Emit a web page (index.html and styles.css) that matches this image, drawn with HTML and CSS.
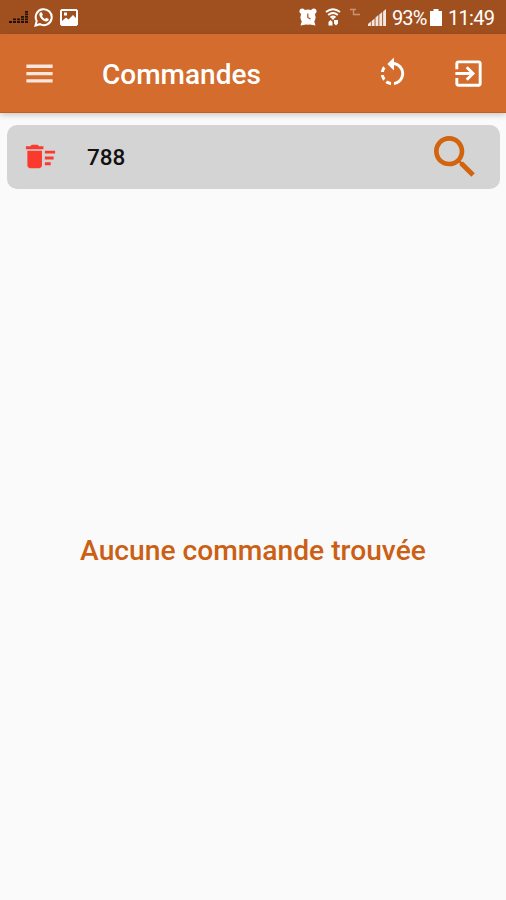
FILE: index.html
```html
<!DOCTYPE html>
<html lang="fr">
<head>
<meta charset="utf-8">
<title>Commandes</title>
<link rel="stylesheet" href="styles.css">
</head>
<body>
<div class="status">
  <svg class="st-eq" width="20" height="14" viewBox="0 0 20 14"><path d="M0 11h3v2H0zM4 11h3v2H4zM4 8.500h3v1.800H4zM8 11h3v2H8zM12 11h3v2h-3zM12 8.500h3v1.800h-3zM12 6h3v1.800h-3zM8 8.500h3v1.800H8zM16 11h3v2h-3zM16 8.500h3v1.800h-3zM16 6h3v1.800h-3zM16 3.500h3v1.800h-3zM16 1h3v1.800h-3z" fill="#241005"/></svg>
  <svg class="st-chat" width="20" height="20" viewBox="0 0 20 20"><path d="M1.500 18.500l1.200-4.500a8 8 0 1 1 3.200 3.200z" fill="none" stroke="#fff" stroke-width="2"/><path d="M6.200 5.500l1.500-.3 1.200 2.600-.9 1.200c.7 1.400 1.700 2.300 3 2.900l1.300-1.200 2.500 1.300c-.1 1.500-1.200 2.400-2.500 2.400C9 14.200 5.500 10.500 5.300 7.500c0-.8.300-1.500.9-2z" fill="#fff"/></svg>
  <svg class="st-pic" width="18" height="17" viewBox="0 0 18 17"><path fill="#fff" fill-rule="evenodd" d="M1.500 0h15L18 1.500v14L16.500 17h-15L0 15.500v-14zM2 2v10l4-3.500 2.500 2L13 6l3 3V2zM4 3.500h3v3H4z"/></svg>
  <span class="gap"></span>
  <svg class="st-alarm" width="18" height="18" viewBox="0 0 18 18"><g fill="#fff"><circle cx="9" cy="9.200" r="7.600"/><circle cx="3.200" cy="3.200" r="2.700"/><circle cx="14.800" cy="3.200" r="2.700"/><path d="M1.500 17.500l1.500-5 4 4zM16.500 17.500l-1.500-5-4 4z"/></g><path d="M8.800 5.500v4l2.700 1.500" fill="none" stroke="#a0501f" stroke-width="1.200"/></svg>
  <svg class="st-wifi" width="16" height="18" viewBox="0 0 16 18"><path d="M1 4q7-5.500 14 0M3.200 7q4.800-4 9.600 0M5.500 9.500q2.500-2 5 0" fill="none" stroke="#fff" stroke-width="1.900"/><path d="M6 9.500h4l-2 2.800zM3.500 17.500V14l2-2 2 2v3.500zM9 12h4v3.500l-2 2-2-2z" fill="#fff"/></svg>
  <svg class="st-net" width="10" height="9" viewBox="0 0 10 9"><path d="M0 1.500h6M3.500 2v4.500H10" fill="none" stroke="#c99374" stroke-width="1.400"/></svg>
  <svg class="st-signal" width="18" height="17" viewBox="0 0 18 17"><path d="M0 17v-2l2.900-2.500V17zM3.700 17v-5l2.900-2.500V17zM7.500 17V8.500L10.400 6v11zM11.300 17V5.500L14.200 3v14zM15.100 17V2.500L18 0v17z" fill="#f4e6de"/></svg>
  <span class="percent">93%</span>
  <svg class="st-bat" width="12" height="17" viewBox="0 0 12 17"><path d="M3.500 0h5v2H12v15H0V2h3.500z" fill="#fff"/></svg>
  <span class="clock">11:49</span>
</div>
<header class="bar">
  <svg class="menu" width="35" height="35" viewBox="0 0 24 24"><path d="M3 18.200h18v-2.300H3zm0-5h18v-2.300H3zm0-7.300v2.300h18V5.900H3z"/></svg>
  <h1>Commandes</h1>
  <svg class="rotate" width="35" height="35" viewBox="0 0 24 24"><path d="M7.110 8.530L5.700 7.110C4.800 8.270 4.240 9.610 4.070 11h2.020c.14-.87.49-1.720 1.020-2.470zM6.090 13H4.070c.17 1.390.72 2.730 1.620 3.890l1.410-1.420c-.52-.75-.87-1.590-1.010-2.470zm1.010 5.320c1.160.9 2.510 1.440 3.900 1.610V17.900c-.87-.15-1.710-.49-2.460-1.030L7.100 18.320zM13 4.070V1L8.450 5.550 13 10V6.090c2.840.48 5 2.940 5 5.910s-2.160 5.430-5 5.910v2.020c3.950-.49 7-3.850 7-7.930s-3.050-7.440-7-7.930z"/></svg>
  <svg class="exit" width="35" height="35" viewBox="0 0 24 24"><path d="M10.090 15.590L11.500 17l5-5-5-5-1.410 1.410L12.670 11H3v2h9.670l-2.580 2.590zM19 3H5c-1.110 0-2 .9-2 2v4h2V5h14v14H5v-4H3v4c0 1.100.89 2 2 2h14c1.100 0 2-.9 2-2V5c0-1.100-.9-2-2-2z"/></svg>
</header>
<div class="search">
  <svg class="sweep" width="35" height="35" viewBox="0 0 24 24"><path d="M15 16h4v2h-4zm0-8h7v2h-7zm0 4h6v2h-6zM3 18c0 1.100.9 2 2 2h6c1.100 0 2-.9 2-2V8H3v10zM14 5h-3l-1-1H6L5 5H2v2h12z"/></svg>
  <span class="query">788</span>
  <svg class="find" width="56" height="56" viewBox="0 0 24 24"><path d="M15.500 14h-.79l-.28-.27C15.410 12.590 16 11.110 16 9.500 16 5.910 13.090 3 9.500 3S3 5.910 3 9.500 5.910 16 9.500 16c1.610 0 3.090-.59 4.230-1.570l.27.28v.79l5 4.990L20.490 19l-4.990-5zm-6 0C7.010 14 5 11.990 5 9.500S7.010 5 9.500 5 14 7.010 14 9.500 11.990 14 9.500 14z"/></svg>
</div>
<main class="empty"><p>Aucune commande trouvée</p></main>
</body>
</html>
```
FILE: styles.css
```css
* { box-sizing: border-box; }
body {
  margin: 0;
  height: 900px;
  display: flex;
  flex-direction: column;
  overflow: hidden;
  background: #fafafa;
  font-family: Roboto, "Liberation Sans", sans-serif;
}
svg { display: block; flex: none; }
.status {
  height: 34px;
  flex: none;
  display: flex;
  align-items: center;
  padding: 0 10px 0 9px;
  background: #a0501f;
  color: #fff;
  font-size: 20px;
  line-height: 34px;
}
.st-chat { margin-left: 5px; }
.st-pic { margin-left: 6px; }
.gap { flex: 1; }
.st-wifi { margin-left: 8px; }
.st-net { margin: 0 8px 10px 9px; }
.percent { width: 36px; margin-left: 6px; letter-spacing: -.9px; }
.st-bat { margin-left: 2px; }
.clock { width: 48px; margin-left: 6px; letter-spacing: -.7px; }
.percent, .clock { white-space: nowrap; padding-top: 2px; }
.bar {
  height: 79px;
  flex: none;
  display: flex;
  align-items: center;
  padding: 0 20px 0 22px;
  background: #d36c2c;
  border-bottom: 1px solid #c5601f;
  box-shadow: 0 2px 6px rgba(0, 0, 0, .2);
  fill: #fff;
}
.menu { fill: #fbe6dd; }
h1 {
  flex: 1;
  margin: 4px 0 0 45px;
  font-size: 28px;
  font-weight: 500;
  line-height: 36px;
  color: #fff;
}
.exit { margin-left: 41px; }
.search {
  height: 64px;
  flex: none;
  display: flex;
  align-items: center;
  margin: 12px 6px 0 7px;
  padding: 0 17px 1px 16px;
  border-radius: 10px;
  background: #d4d4d4;
}
.sweep { margin-bottom: 1px; fill: #f93a2c; }
.query {
  flex: 1;
  margin-left: 29px;
  font-size: 22.500px;
  font-weight: 500;
  color: #111;
}
.find { fill: #d2640f; }
.empty {
  flex: 1;
  display: flex;
  align-items: center;
  justify-content: center;
}
.empty p {
  margin: 0 0 -12px;
  font-size: 28.200px;
  font-weight: 500;
  line-height: 34px;
  color: #cb6015;
  white-space: nowrap;
}
```
